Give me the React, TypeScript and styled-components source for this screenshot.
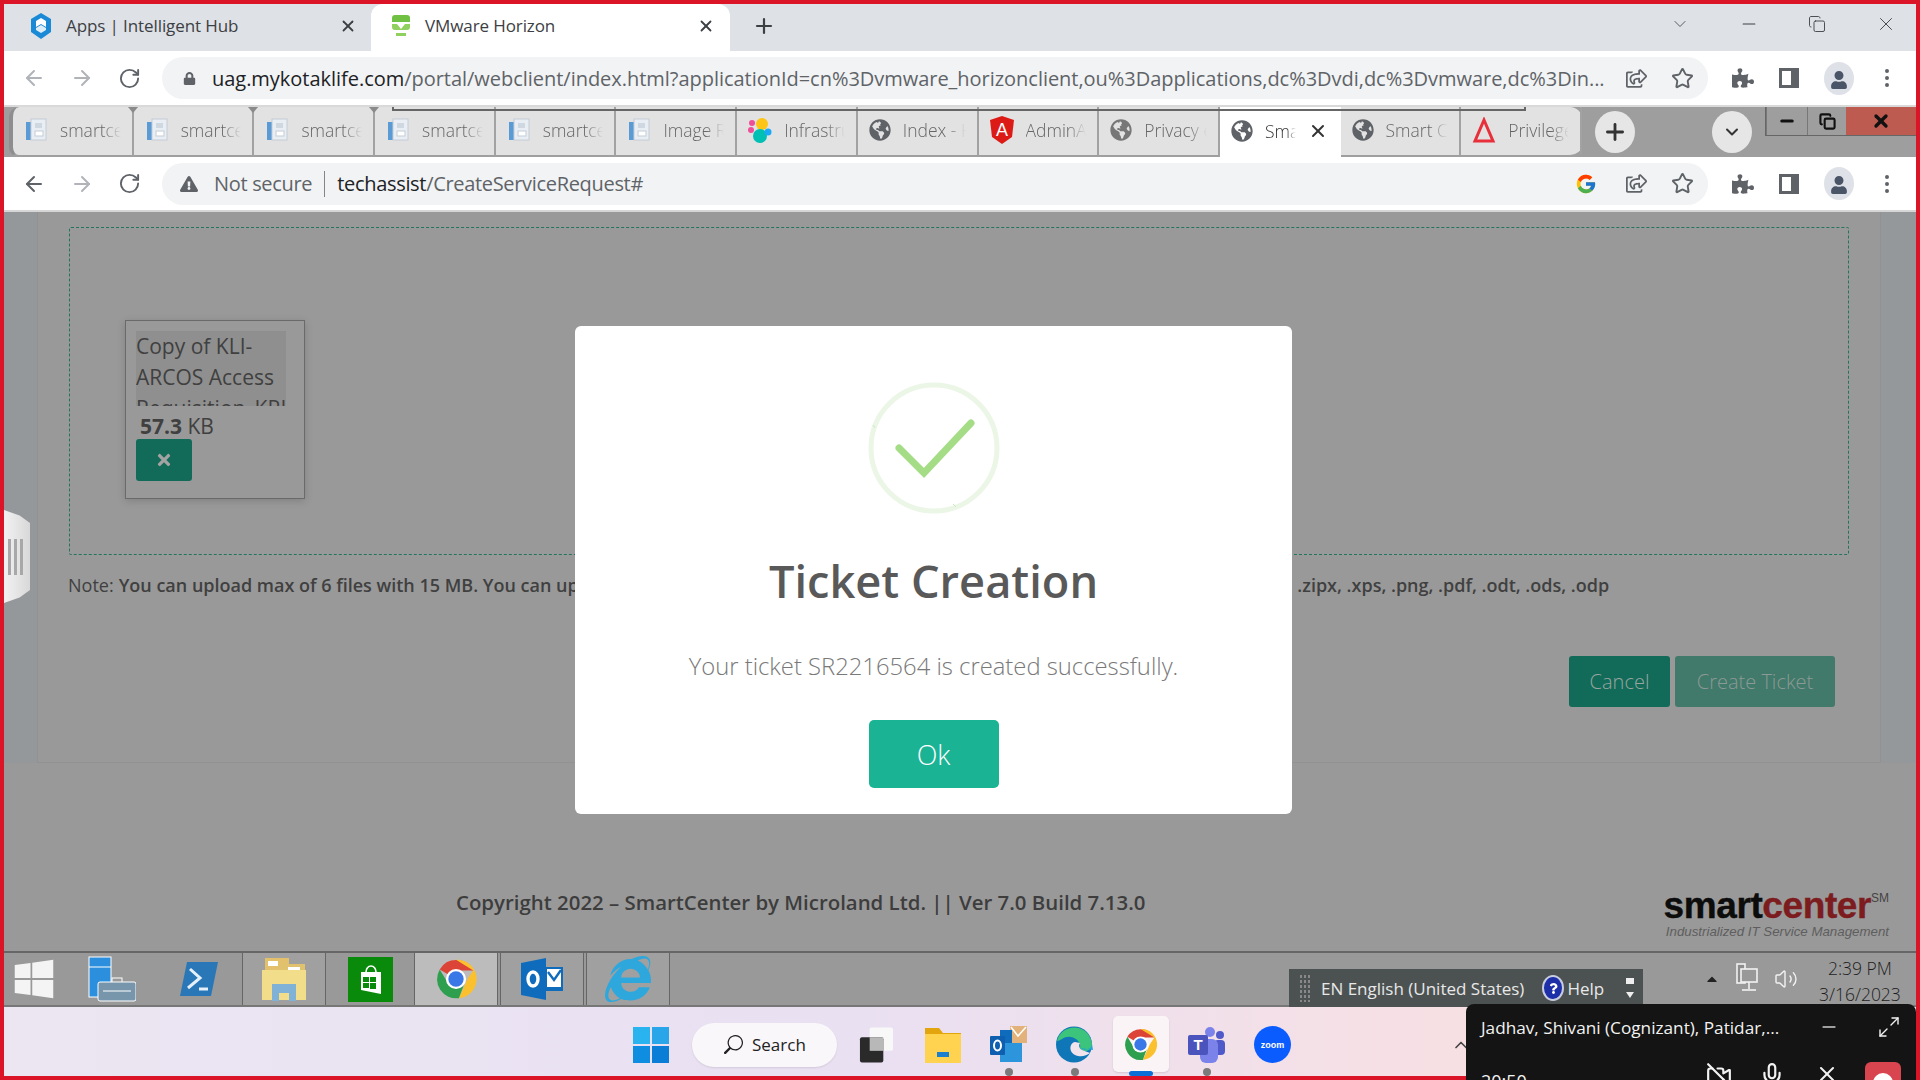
import React from "react";
import styled, { createGlobalStyle } from "styled-components";
import { ArrowLeft, ArrowRight, RotateCw, Star, MoreVertical, Minus, Plus, X, ChevronDown, ChevronUp, Copy, Maximize2, Mic, VideoOff, Volume2 } from "lucide-react";
import { FaLock, FaExclamationTriangle, FaPuzzlePiece, FaUser, FaGlobeAmericas, FaTimes, FaRegShareSquare, FaInternetExplorer, FaWindows, FaCaretUp, FaQuestion } from "react-icons/fa";
import { FcGoogle } from "react-icons/fc";
import { BsSearch } from "react-icons/bs";

const GlobalStyle = createGlobalStyle`
  html, body { margin: 0; padding: 0; background: #999; }
  body { font-family: "Open Sans", "Liberation Sans", sans-serif; }
  * { box-sizing: border-box; }
`;

const Frame = styled.div`
  position: relative;
  width: 1920px;
  height: 1080px;
  border: 4px solid #dc1428;
  display: flex;
  flex-direction: column;
`;

/* ---- outer chrome ---- */
const TopTabs = styled.div`
  height: 47px;
  background: #dee1e6;
  display: flex;
  align-items: stretch;
  color: #3c4043;
`;

const TopTab = styled.div<{ $active?: boolean }>`
  width: 359px;
  padding: 0 ${(p) => (p.$active ? "15px" : "14px")} 4px ${(p) => (p.$active ? "19px" : "17px")};
  background: ${(p) => (p.$active ? "#fff" : "transparent")};
  border-radius: 12px 12px 0 0;
  display: flex;
  align-items: center;
  gap: 13px;
  font-size: 17px;
  letter-spacing: -0.1px;
  margin-left: ${(p) => (p.$active ? "0" : "8px")};
  & > span { flex: 1; white-space: nowrap; }
`;

const NewTab = styled.div`
  width: 68px;
  padding-bottom: 4px;
  display: flex;
  align-items: center;
  justify-content: center;
  color: #3c4043;
`;

const WinControls = styled.div`
  margin-left: auto;
  padding: 0 19px 7px 0;
  display: flex;
  align-items: center;
  gap: 49px;
  color: #3c4043;
`;

const Toolbar = styled.div<{ $tall?: boolean }>`
  height: ${(p) => (p.$tall ? "55px" : "54px")};
  background: #fff;
  display: flex;
  align-items: center;
  padding-left: 18px;
  border-bottom: ${(p) => (p.$tall ? "2px solid #d6d6d6" : "none")};
`;

const NavButtons = styled.div`
  display: flex;
  align-items: center;
  gap: 24px;
  width: 140px;
`;

const Omnibox = styled.div<{ $tight?: boolean }>`
  width: 1546px;
  height: 42px;
  border-radius: 21px;
  background: #f1f3f4;
  display: flex;
  align-items: center;
  padding: 0 14px 0 ${(p) => (p.$tight ? "18px" : "21px")};
  font-size: 20px;
  letter-spacing: ${(p) => (p.$tight ? "-0.32px" : "-0.03px")};
  color: #5f6368;
  gap: ${(p) => (p.$tight ? "12px" : "16px")};
  white-space: nowrap;
  & > svg:first-child { margin-right: ${(p) => (p.$tight ? "4px" : "0")}; }
`;

const UrlText = styled.div`
  flex: 1;
  overflow: hidden;
  & > b { font-weight: 400; color: #202124; }
`;

const Divider = styled.i`
  width: 1px;
  height: 26px;
  background: #80868b;
`;

const OmniActions = styled.div`
  display: flex;
  align-items: center;
  gap: 24px;
  color: #5f6368;
`;

const GoogleMark = styled(FcGoogle)`
  margin-right: 5px;
`;

const ToolIcons = styled.div`
  display: flex;
  align-items: center;
  gap: 25px;
  margin-left: 24px;
  color: #5f6368;
  & > svg:last-child { margin-left: -4px; }
`;

const Avatar = styled.div`
  width: 30px;
  height: 33px;
  border-radius: 50%;
  background: #dfe1e8;
  display: flex;
  align-items: flex-end;
  justify-content: center;
  color: #4a5568;
  padding-bottom: 6px;
`;

const ToolbarGap = styled.div`
  height: 2px;
  background: #d9d9d9;
`;

/* ---- inner tab strip ---- */
const InnerStrip = styled.div`
  position: relative;
  height: 50px;
  background: #9e9e9e;
  display: flex;
`;

const TabGroup = styled.div`
  margin-left: 5px;
  display: flex;
  background: #e2e2e2;
  border-bottom: 2px solid #9f9f9f;
  border-radius: 10px 12px 12px 10px;
  border-left: 4px solid #8e8e8e;
`;

const InnerTab = styled.div<{ $active?: boolean; $tick?: boolean }>`
  position: relative;
  width: 120.7px;
  display: flex;
  align-items: center;
  padding: 0 ${(p) => (p.$active ? "0" : "11px")} 2px 11px;
  gap: 12px;
  font-size: 17.5px;
  font-weight: 300;
  color: ${(p) => (p.$active ? "#333" : "#666")};
  background: ${(p) => (p.$active ? "#fff" : "transparent")};
  border-right: ${(p) => (p.$active ? "none" : "2px solid #a2a2a2")};
  margin-bottom: ${(p) => (p.$active ? "-2px" : "0")};
  white-space: nowrap;
  & > span {
    flex: 1;
    min-width: 0;
    overflow: hidden;
    -webkit-mask-image: linear-gradient(90deg, #000 70%, transparent);
    mask-image: linear-gradient(90deg, #000 70%, transparent);
  }
  &::after {
    content: "";
    display: ${(p) => (p.$tick ? "block" : "none")};
    position: absolute;
    right: -6px;
    top: 0;
    border-left: 5px solid transparent;
    border-right: 5px solid transparent;
    border-top: 6px solid #8a8a8a;
  }
`;

const GhostLine = styled.div`
  position: absolute;
  left: 388px;
  top: 0;
  width: 1134px;
  height: 4px;
  border-bottom: 2px solid #666;
  border-left: 2px solid #666;
  border-right: 2px solid #666;
`;

const RoundBtn = styled.div<{ $ml: number }>`
  width: 40px;
  height: 42px;
  margin-left: ${(p) => p.$ml}px;
  border-radius: 50%;
  background: #e6e6e6;
  display: flex;
  align-items: center;
  justify-content: center;
  color: #333;
  align-self: center;
`;

const StripCtrls = styled.div`
  margin-left: auto;
  align-self: flex-start;
  display: flex;
  height: 29px;
  border-bottom: 1px solid #666;
  border-left: 1px solid #666;
  color: #111;
`;

const StripCtrl = styled.div<{ $w: number; $red?: boolean }>`
  width: ${(p) => p.$w}px;
  display: flex;
  align-items: center;
  justify-content: center;
  background: ${(p) => (p.$red ? "#bd5b50" : "#9e9e9e")};
  border-left: ${(p) => (p.$red ? "none" : "1px solid #777")};
`;

/* ---- page ---- */
const Page = styled.div`
  height: 739px;
  background: #999;
  display: flex;
  flex-direction: column;
`;

const Main = styled.div`
  height: 551px;
  display: flex;
  background: #95989b;
`;

const Gutter = styled.div<{ $w: number }>`
  width: ${(p) => p.$w}px;
`;

const Card = styled.div`
  flex: 1;
  background: #999;
  border: 1px solid #929292;
  border-top: none;
  padding: 15px 31px 0;
  display: flex;
  flex-direction: column;
`;

const DropZone = styled.div`
  height: 328px;
  border: 1px dashed #22745f;
  border-radius: 2px;
  padding: 92px 0 0 55px;
`;

const FileCard = styled.div`
  width: 180px;
  height: 179px;
  border: 1px solid #6a6a6a;
  box-shadow: 0 2px 8px rgba(0, 0, 0, 0.16);
  padding: 10px 10px 0;
`;

const FileName = styled.div`
  width: 150px;
  height: 75px;
  overflow: hidden;
  background: #8f8f8f;
  font-size: 21px;
  line-height: 31px;
  color: #404040;
`;

const FileSize = styled.div`
  font-size: 21px;
  line-height: 25px;
  margin: 8px 0 0 4px;
  color: #404040;
  & > b { font-weight: 700; }
`;

const RemoveBtn = styled.div`
  width: 56px;
  height: 42px;
  background: #116b58;
  border-radius: 3px;
  display: flex;
  align-items: center;
  justify-content: center;
  color: #a3a3a3;
`;

const Note = styled.div`
  margin: 19px 0 0 -1px;
  height: 22px;
  line-height: 22px;
  display: flex;
  font-size: 18px;
  font-weight: 600;
  color: #404040;
  white-space: nowrap;
  & > em { font-style: normal; font-weight: 400; margin-right: 5px; }
  & > span + span { margin-left: 681px; }
`;

const Actions = styled.div`
  margin-top: 60px;
  padding-right: 14px;
  display: flex;
  justify-content: flex-end;
  gap: 5px;
`;

const ActionBtn = styled.div<{ $w: number; $muted?: boolean }>`
  width: ${(p) => p.$w}px;
  height: 51px;
  border-radius: 3px;
  background: ${(p) => (p.$muted ? "#41796a" : "#116b58")};
  color: ${(p) => (p.$muted ? "#8c9a95" : "#99a5a0")};
  font-size: 20px;
  font-weight: 300;
  display: flex;
  align-items: center;
  justify-content: center;
`;

const Footer = styled.div`
  flex: 1;
  display: flex;
  justify-content: space-between;
  align-items: flex-start;
  padding: 125px 27px 0 452px;
`;

const Copyright = styled.div`
  font-size: 20.4px;
  line-height: 28px;
  font-weight: 600;
  color: #3d3d3d;
  white-space: nowrap;
`;

const Logo = styled.div`
  margin-top: -1px;
  text-align: right;
  font-family: "Liberation Sans", sans-serif;
`;

const LogoMark = styled.div`
  font-size: 37px;
  line-height: 37px;
  font-weight: 700;
  letter-spacing: -0.4px;
  color: #0c0c0c;
  white-space: nowrap;
  -webkit-text-stroke: 0.4px currentColor;
  & > em { font-style: normal; color: #7c1c1e; }
  & > sup {
    font-size: 12px;
    font-weight: 400;
    color: #444;
    vertical-align: 16px;
    line-height: 0;
    letter-spacing: 0;
    -webkit-text-stroke: 0;
  }
`;

const LogoTag = styled.div`
  font-size: 13.3px;
  line-height: 16px;
  font-style: italic;
  color: #5e5e5e;
  white-space: nowrap;
`;

const SideHandle = styled.div`
  position: absolute;
  left: 0;
  top: 506px;
  width: 26px;
  height: 93px;
  background: linear-gradient(90deg, #f2f2f2, #d8d8d8);
  clip-path: polygon(0 0, 60% 6%, 100% 14%, 100% 86%, 60% 94%, 0 100%);
  display: flex;
  justify-content: center;
  align-items: center;
  gap: 3px;
  padding-right: 4px;
  & > i { width: 3px; height: 36px; background: #a8a8a8; }
`;

/* ---- success dialog ---- */
const Dialog = styled.div`
  position: absolute;
  left: 571px;
  top: 322px;
  width: 717px;
  height: 488px;
  background: #fff;
  border-radius: 6px;
  display: flex;
  flex-direction: column;
  align-items: center;
  padding-top: 56px;
`;

const DialogTitle = styled.div`
  margin-top: 37px;
  font-size: 45.2px;
  line-height: 60px;
  font-weight: 600;
  color: #595959;
  white-space: nowrap;
`;

const DialogText = styled.div`
  margin-top: 37px;
  font-size: 23.8px;
  line-height: 36px;
  font-weight: 300;
  color: #797979;
  white-space: nowrap;
`;

const OkBtn = styled.div`
  margin-top: 36px;
  width: 130px;
  height: 68px;
  background: #1ab394;
  border-radius: 5px;
  font-size: 27px;
  font-weight: 300;
  color: #fff;
  display: flex;
  align-items: center;
  justify-content: center;
`;

/* ---- remote taskbar ---- */
const LegacyBar = styled.div`
  height: 56px;
  background: #999;
  border-top: 2px solid #666;
  border-bottom: 2px solid #777;
  display: flex;
  align-items: stretch;
`;

const LegacySlot = styled.div<{ $w: number; $boxed?: boolean; $lit?: boolean; $mr?: number }>`
  width: ${(p) => p.$w}px;
  margin-right: ${(p) => p.$mr ?? 0}px;
  display: flex;
  align-items: center;
  justify-content: center;
  background: ${(p) => (p.$lit ? "#bcbcbc" : p.$boxed ? "#a0a0a0" : "transparent")};
  border: ${(p) => (p.$boxed ? "1px solid #666" : "none")};
  border-top: none;
  border-bottom: none;
`;

const LangBar = styled.div`
  margin-left: auto;
  width: 354px;
  margin-top: 16px;
  margin-bottom: -2px;
  background: #4c5252;
  color: #e8e8e8;
  display: flex;
  align-items: center;
  font-size: 17px;
  padding-left: 10px;
  white-space: nowrap;
`;

const Grip = styled.div`
  width: 12px;
  height: 28px;
  margin-right: 10px;
  background-image: radial-gradient(#888 1px, transparent 1.2px);
  background-size: 4px 5px;
`;

const HelpDot = styled.div`
  width: 22px;
  height: 26px;
  margin: 0 3px 0 18px;
  border-radius: 50%;
  background: #1c2fa8;
  border: 2px solid #c8cce0;
  display: flex;
  align-items: center;
  justify-content: center;
  color: #fff;
`;

const LangArrows = styled.div`
  margin-left: 22px;
  display: flex;
  flex-direction: column;
  align-items: center;
  gap: 8px;
  & > i:first-child { width: 8px; height: 6px; background: #eee; }
  & > i:last-child {
    width: 0;
    height: 0;
    border-left: 4px solid transparent;
    border-right: 4px solid transparent;
    border-top: 6px solid #eee;
  }
`;

const Tray = styled.div`
  width: 273px;
  padding-left: 61px;
  display: flex;
  align-items: center;
  gap: 16px;
  color: #f2f2f2;
`;

const Clock = styled.div`
  margin-left: 5px;
  padding-top: 3px;
  text-align: center;
  font-size: 17.5px;
  line-height: 26px;
  font-weight: 300;
  color: #1c1c1c;
  white-space: nowrap;
`;

/* ---- host taskbar ---- */
const Taskbar = styled.div`
  height: 69px;
  background: linear-gradient(90deg, #ebe6f2 0%, #e9e0f2 45%, #f7e0e4 75%, #f4e4ea 100%);
  display: flex;
  align-items: center;
  padding: 6px 0 0 629px;
`;

const SearchPill = styled.div`
  width: 145px;
  height: 44px;
  margin: 0 21px 0 23px;
  border-radius: 22px;
  background: #faf7fb;
  box-shadow: 0 1px 2px rgba(0, 0, 0, 0.1);
  display: flex;
  align-items: center;
  gap: 9px;
  padding-left: 32px;
  font-size: 17px;
  color: #222;
`;

const TaskItem = styled.div<{ $ml?: number; $dot?: string; $on?: boolean }>`
  position: relative;
  width: 37px;
  height: 37px;
  margin-left: ${(p) => p.$ml ?? 29}px;
  display: flex;
  align-items: center;
  justify-content: center;
  &::before {
    content: "";
    display: ${(p) => (p.$on ? "block" : "none")};
    position: absolute;
    left: -9px;
    top: -10px;
    width: 56px;
    height: 56px;
    border-radius: 5px;
    background: #fbf4f7;
    box-shadow: 0 1px 2px rgba(0, 0, 0, 0.12);
  }
  &::after {
    content: "";
    display: ${(p) => (p.$dot ? "block" : "none")};
    position: absolute;
    bottom: -13px;
    left: 50%;
    transform: translateX(-50%);
    width: ${(p) => (p.$dot === "wide" ? "24px" : "8px")};
    height: ${(p) => (p.$dot === "wide" ? "5px" : "8px")};
    border-radius: 4px;
    background: ${(p) => (p.$dot === "wide" ? "#0a6fd6" : "#7b7b7b")};
  }
  & > svg, & > div { position: relative; z-index: 1; }
`;

const ZoomBadge = styled.div`
  width: 37px;
  height: 37px;
  border-radius: 50%;
  background: #0b5cff;
  color: #fff;
  font-family: "Liberation Sans", sans-serif;
  font-size: 9px;
  font-weight: 700;
  display: flex;
  align-items: center;
  justify-content: center;
`;

const ZoomWindow = styled.div`
  position: absolute;
  left: 1462px;
  top: 1000px;
  width: 450px;
  height: 76px;
  background: #141414;
  border-radius: 8px 8px 0 0;
  overflow: hidden;
  color: #f2f2f2;
  padding-left: 15px;
`;

const ZoomHead = styled.div`
  height: 46px;
  display: flex;
  align-items: center;
  font-size: 17.2px;
  white-space: nowrap;
  & > span { flex: 1; }
`;

const ZoomMin = styled.div`
  margin-right: 38px;
  display: flex;
  color: #ccc;
`;

const ZoomExpand = styled.div`
  margin-right: 15px;
  display: flex;
`;

const ZoomRow = styled.div`
  margin-top: 12px;
  display: flex;
  align-items: flex-start;
`;

const ZoomTime = styled.div`
  font-size: 18px;
  line-height: 24px;
  margin-top: 7px;
  width: 223px;
`;

const ZoomTool = styled.div<{ $w: number }>`
  width: ${(p) => p.$w}px;
  display: flex;
  justify-content: center;
`;

const ZoomEnd = styled.div`
  width: 36px;
  height: 40px;
  margin-left: 21px;
  border-radius: 6px;
  background: #d9454f;
  display: flex;
  justify-content: center;
  padding-top: 11px;
  & > i { width: 20px; height: 20px; border-radius: 50%; background: #fff; }
`;

/* ---- drawn icons ---- */
function ChromeIcon({ s = 37 }: { s?: number }) {
  return (
    <svg width={s} height={s} viewBox="0 0 48 48">
      <path d="M24 24 L7 14 A20 20 0 0 1 42 15 L24 15 Z" fill="#db4437" />
      <path d="M24 4 A20 20 0 0 1 27 44 L36 24 L42 15 Z" fill="#fbc02d" />
      <path d="M7 14 A20 20 0 0 0 27 44 L33 28 L16 29 Z" fill="#2e9e4f" />
      <circle cx="24" cy="24" r="10.5" fill="#fff" />
      <circle cx="24" cy="24" r="8" fill="#3b78e7" />
    </svg>
  );
}

function DocIcon() {
  return (
    <svg width="24" height="24" viewBox="0 0 24 24">
      <rect x="2" y="4" width="5" height="18" fill="#5b9bd5" />
      <rect x="7" y="1" width="15" height="21" fill="#e9eef4" stroke="#c3ccd6" />
      <rect x="11" y="5" width="7" height="5" fill="#cfd8e0" />
      <rect x="11" y="13" width="8" height="5" fill="#fff" stroke="#c3ccd6" />
    </svg>
  );
}

function ElasticIcon() {
  return (
    <svg width="24" height="26" viewBox="0 0 24 26">
      <circle cx="14" cy="7" r="6" fill="#fec514" />
      <circle cx="12" cy="19" r="7" fill="#00bfb3" />
      <circle cx="4" cy="6" r="3" fill="#f04e98" />
      <circle cx="3" cy="13" r="3" fill="#f04e98" />
      <circle cx="20" cy="15" r="3.5" fill="#1ba9f5" />
    </svg>
  );
}

function AngularIcon() {
  return (
    <svg width="24" height="28" viewBox="0 0 24 28">
      <path d="M12 0 L24 4 L22 21 L12 28 L2 21 L0 4 Z" fill="#dd1b16" />
      <text x="12" y="20" textAnchor="middle" fontSize="18" fill="#fff" fontFamily="Liberation Sans">A</text>
    </svg>
  );
}

function TriangleIcon() {
  return (
    <svg width="24" height="26" viewBox="0 0 24 26">
      <path d="M12 3 L21 24 H3 Z" fill="none" stroke="#e8303c" strokeWidth="3" />
    </svg>
  );
}

function PanelIcon() {
  return (
    <svg width="20" height="20" viewBox="0 0 20 20">
      <rect x="1.5" y="1.5" width="17" height="17" fill="none" stroke="#5f6368" strokeWidth="3" />
      <rect x="12" y="2" width="6" height="16" fill="#5f6368" />
    </svg>
  );
}

function HubIcon() {
  return (
    <svg width="24" height="26" viewBox="0 0 24 26">
      <path d="M12 0 L22 6 V19 L12 26 L2 19 V6 Z" fill="#1b8ad6" />
      <path d="M12 5 L17 8 V14 L12 11 L7 14 V8 Z" fill="#fff" />
      <path d="M7 15 L12 12 L17 15 V17 L12 20 L7 17 Z" fill="#fff" opacity="0.85" />
    </svg>
  );
}

function HorizonIcon() {
  return (
    <svg width="22" height="24" viewBox="0 0 22 24">
      <path d="M2 4 Q2 1 5 1 H17 Q20 1 20 4 V8 H2 Z" fill="#70c043" />
      <path d="M2 10 H7 L11 15 L15 10 H20 V13 Q20 16 17 16 H5 Q2 16 2 13 Z" fill="#8fd05f" />
      <rect x="6" y="19" width="10" height="3" fill="#8fd05f" />
    </svg>
  );
}

function ServerIcon() {
  return (
    <svg width="48" height="46" viewBox="0 0 48 46">
      <rect x="1" y="1" width="22" height="40" fill="#2b8fdd" stroke="#fff" />
      <line x1="1" y1="11" x2="23" y2="11" stroke="#fff" />
      <rect x="24" y="22" width="10" height="8" fill="none" stroke="#fff" />
      <rect x="10" y="26" width="38" height="19" rx="2" fill="#7795ab" stroke="#fff" />
      <line x1="15" y1="35" x2="43" y2="35" stroke="#fff" />
    </svg>
  );
}

function PowerShellIcon() {
  return (
    <svg width="40" height="36" viewBox="0 0 40 36">
      <path d="M8 1 H39 L32 35 H1 Z" fill="#2a77b8" />
      <path d="M11 8 L21 17 L9 27" fill="none" stroke="#e6f0f8" strokeWidth="3" />
      <line x1="20" y1="28" x2="29" y2="28" stroke="#e6f0f8" strokeWidth="3" />
    </svg>
  );
}

function ExplorerIcon() {
  return (
    <svg width="46" height="46" viewBox="0 0 46 46">
      <rect x="4" y="2" width="24" height="14" fill="#e2c06c" />
      <rect x="7" y="5" width="10" height="5" fill="#fff" />
      <rect x="18" y="8" width="26" height="14" fill="#dfc16e" />
      <rect x="27" y="11" width="12" height="5" fill="#fff" />
      <path d="M1 14 H45 V44 H1 Z" fill="#f2dd8b" />
      <path d="M11 28 H35 V45 H28 V37 H18 V45 H11 Z" fill="#7fb2d6" />
    </svg>
  );
}

function StoreIcon() {
  return (
    <svg width="45" height="45" viewBox="0 0 45 45">
      <rect width="45" height="45" fill="#0a8a0a" />
      <path d="M13 15 H33 V37 L13 33 Z" fill="#fff" />
      <path d="M18 15 A5 6 0 0 1 28 15" fill="none" stroke="#fff" strokeWidth="1.6" />
      <rect x="15" y="20" width="6" height="5" fill="#0a8a0a" />
      <rect x="22" y="20" width="6" height="5" fill="#0a8a0a" />
      <rect x="15" y="26" width="6" height="5" fill="#0a8a0a" />
      <rect x="22" y="26" width="6" height="6" fill="#0a8a0a" />
    </svg>
  );
}

function OutlookIcon() {
  return (
    <svg width="42" height="42" viewBox="0 0 42 42">
      <rect x="24" y="9" width="18" height="24" fill="#0f6cbd" />
      <rect x="26" y="11" width="14" height="18" fill="#fff" />
      <path d="M27 14 L33 22 L40 12" fill="none" stroke="#0f6cbd" strokeWidth="2.4" />
      <path d="M0 5 L25 0 V42 L0 37 Z" fill="#0f6cbd" />
      <ellipse cx="12" cy="21" rx="5" ry="7" fill="none" stroke="#fff" strokeWidth="3.4" />
    </svg>
  );
}

function OutlookNewIcon() {
  return (
    <svg width="37" height="37" viewBox="0 0 37 37">
      <rect x="20" y="0" width="17" height="17" fill="#e3b27a" />
      <path d="M21 1 L28 10 L36 1" fill="none" stroke="#fff" strokeWidth="1.5" />
      <rect x="10" y="4" width="12" height="13" fill="#0f6cbd" />
      <rect x="10" y="17" width="22" height="19" fill="#2c95dc" />
      <rect x="0" y="10" width="15" height="19" rx="1" fill="#0f5fb0" />
      <ellipse cx="7.5" cy="19.5" rx="3.5" ry="5" fill="none" stroke="#fff" strokeWidth="2" />
    </svg>
  );
}

function Win11Icon() {
  return (
    <svg width="36" height="36" viewBox="0 0 36 36">
      <rect width="17" height="17" fill="#29b4ef" />
      <rect x="19" width="17" height="17" fill="#29a6ea" />
      <rect y="19" width="17" height="17" fill="#0f8de0" />
      <rect x="19" y="19" width="17" height="17" fill="#0a7ed6" />
    </svg>
  );
}

function TaskViewIcon() {
  return (
    <svg width="38" height="36" viewBox="0 0 38 36">
      <rect x="12" y="0" width="24" height="24" rx="2" fill="#f8f8f8" />
      <rect x="2" y="10" width="24" height="26" rx="2" fill="#2a2a2a" />
      <rect x="12" y="10" width="14" height="14" fill="#b8b8b8" />
    </svg>
  );
}

function FolderIcon() {
  return (
    <svg width="36" height="36" viewBox="0 0 36 36">
      <path d="M0 1 H14 L18 6 H36 V34 H0 Z" fill="#e3a50e" />
      <rect y="7" width="36" height="29" fill="#ffd34f" />
      <rect x="12" y="25" width="12" height="5" fill="#1c7ecf" />
    </svg>
  );
}

function EdgeIcon() {
  return (
    <svg width="37" height="37" viewBox="0 0 37 37">
      <circle cx="18" cy="18.5" r="18" fill="#0f77b8" />
      <path d="M1 15 C5 -3 33 -4 36 18 C36 26 26 27 24 22 C26 14 14 7 6 13 C4 14 2 15 1 15 Z" fill="#3cc47c" />
      <path d="M36 18 C36 24 27 25 25 22 L37 24 Z" fill="#1fa5d8" />
      <path d="M19 16 C13 17 12 28 22 30 C27 31 31 29 34 27 L26 24 C24 23 22 20 24 17 Z" fill="#f0e3ec" />
    </svg>
  );
}

function TeamsIcon() {
  return (
    <svg width="37" height="37" viewBox="0 0 37 37">
      <circle cx="22" cy="6" r="5" fill="#7b83eb" />
      <circle cx="32" cy="9" r="4" fill="#5059c9" />
      <rect x="26" y="14" width="11" height="15" rx="4" fill="#5059c9" />
      <rect x="12" y="13" width="18" height="24" rx="6" fill="#7b83eb" />
      <rect x="0" y="9" width="20" height="20" rx="2" fill="#4b53bc" />
      <text x="10" y="24" textAnchor="middle" fontSize="15" fontWeight="700" fill="#fff" fontFamily="Liberation Sans">T</text>
    </svg>
  );
}

function NetworkIcon() {
  return (
    <svg width="22" height="32" viewBox="0 0 22 32" fill="none" stroke="#f2f2f2" strokeWidth="1.6">
      <rect x="1" y="1" width="8" height="19" fill="#8c8c8c" />
      <rect x="5" y="6" width="16" height="13" fill="#999" />
      <line x1="13" y1="19" x2="13" y2="26" />
      <line x1="6" y1="27" x2="20" y2="27" />
    </svg>
  );
}

const doc = <DocIcon />;
const globe = (c: string) => <FaGlobeAmericas size={22} color={c} />;

const innerTabs: { label: string; icon: React.ReactNode; active?: boolean; tick?: boolean }[] = [
  { label: "smartcenter", icon: doc, tick: true },
  { label: "smartcenter", icon: doc, tick: true },
  { label: "smartcenter", icon: doc, tick: true },
  { label: "smartcenter", icon: doc },
  { label: "smartcenter", icon: doc },
  { label: "Image Resizer", icon: doc },
  { label: "Infrastructure", icon: <ElasticIcon /> },
  { label: "Index - Home", icon: globe("#5f6368") },
  { label: "AdminArea", icon: <AngularIcon /> },
  { label: "Privacy error", icon: globe("#777") },
  { label: "Smart", icon: globe("#5f6368"), active: true },
  { label: "Smart Center", icon: globe("#5f6368") },
  { label: "Privileged", icon: <TriangleIcon /> },
];

export default function App() {
  return (
    <>
      <GlobalStyle />
      <Frame>
        <TopTabs>
          <TopTab>
            <HubIcon />
            <span>Apps | Intelligent Hub</span>
            <X size={18} strokeWidth={2.4} />
          </TopTab>
          <TopTab $active>
            <HorizonIcon />
            <span>VMware Horizon</span>
            <X size={18} strokeWidth={2.4} />
          </TopTab>
          <NewTab>
            <Plus size={24} strokeWidth={2.2} />
          </NewTab>
          <WinControls>
            <ChevronDown size={20} strokeWidth={1} />
            <Minus size={20} strokeWidth={1.4} />
            <Copy size={18} strokeWidth={1.2} />
            <X size={22} strokeWidth={1} />
          </WinControls>
        </TopTabs>

        <Toolbar>
          <NavButtons>
            <ArrowLeft size={24} color="#b0b3b8" />
            <ArrowRight size={24} color="#b0b3b8" />
            <RotateCw size={23} color="#5f6368" />
          </NavButtons>
          <Omnibox>
            <FaLock size={13} />
            <UrlText>
              <b>uag.mykotaklife.com</b>/portal/webclient/index.html?applicationId=cn%3Dvmware_horizonclient,ou%3Dapplications,dc%3Dvdi,dc%3Dvmware,dc%3Din...
            </UrlText>
            <OmniActions>
              <FaRegShareSquare size={21} />
              <Star size={23} />
            </OmniActions>
          </Omnibox>
          <ToolIcons>
            <FaPuzzlePiece size={22} />
            <PanelIcon />
            <Avatar>
              <FaUser size={18} />
            </Avatar>
            <MoreVertical size={24} />
          </ToolIcons>
        </Toolbar>
        <ToolbarGap />

        <InnerStrip>
          <TabGroup>
            {innerTabs.map((t, i) => (
              <InnerTab key={i} $active={t.active} $tick={t.tick}>
                {t.icon}
                <span>{t.label}</span>
                {t.active && <X size={20} color="#333" strokeWidth={2.4} style={{ marginRight: 13 }} />}
              </InnerTab>
            ))}
          </TabGroup>
          <GhostLine />
          <RoundBtn $ml={13}>
            <Plus size={26} strokeWidth={2.6} />
          </RoundBtn>
          <RoundBtn $ml={77}>
            <ChevronDown size={20} strokeWidth={2.4} />
          </RoundBtn>
          <StripCtrls>
            <StripCtrl $w={41}>
              <Minus size={18} strokeWidth={4} />
            </StripCtrl>
            <StripCtrl $w={39}>
              <Copy size={17} strokeWidth={3} />
            </StripCtrl>
            <StripCtrl $w={70} $red>
              <X size={20} strokeWidth={4} />
            </StripCtrl>
          </StripCtrls>
        </InnerStrip>

        <Toolbar $tall>
          <NavButtons>
            <ArrowLeft size={24} color="#5f6368" />
            <ArrowRight size={24} color="#b0b3b8" />
            <RotateCw size={23} color="#5f6368" />
          </NavButtons>
          <Omnibox $tight>
            <FaExclamationTriangle size={18} />
            <span>Not secure</span>
            <Divider />
            <UrlText>
              <b>techassist</b>/CreateServiceRequest#
            </UrlText>
            <OmniActions>
              <GoogleMark size={22} />
              <FaRegShareSquare size={21} />
              <Star size={23} />
            </OmniActions>
          </Omnibox>
          <ToolIcons>
            <FaPuzzlePiece size={22} />
            <PanelIcon />
            <Avatar>
              <FaUser size={18} />
            </Avatar>
            <MoreVertical size={24} />
          </ToolIcons>
        </Toolbar>

        <Page>
          <Main>
            <Gutter $w={33} />
            <Card>
              <DropZone>
                <FileCard>
                  <FileName>Copy of KLI-ARCOS Access Requisition_KRI</FileName>
                  <FileSize>
                    <b>57.3</b> KB
                  </FileSize>
                  <RemoveBtn>
                    <FaTimes size={18} />
                  </RemoveBtn>
                </FileCard>
              </DropZone>
              <Note>
                <em>Note:</em>
                <span>You can upload max of 6 files with 15 MB. You can upload</span>
                <span>.zipx, .xps, .png, .pdf, .odt, .ods, .odp</span>
              </Note>
              <Actions>
                <ActionBtn $w={101}>Cancel</ActionBtn>
                <ActionBtn $w={160} $muted>
                  Create Ticket
                </ActionBtn>
              </Actions>
            </Card>
            <Gutter $w={35} />
          </Main>
          <Footer>
            <Copyright>Copyright 2022 – SmartCenter by Microland Ltd. || Ver 7.0 Build 7.13.0</Copyright>
            <Logo>
              <LogoMark>
                smart<em>center</em>
                <sup>SM</sup>
              </LogoMark>
              <LogoTag>Industrialized IT Service Management</LogoTag>
            </Logo>
          </Footer>
        </Page>

        <LegacyBar>
          <LegacySlot $w={60}>
            <FaWindows size={44} color="#f4f4f4" />
          </LegacySlot>
          <LegacySlot $w={96}>
            <ServerIcon />
          </LegacySlot>
          <LegacySlot $w={78} $mr={4}>
            <PowerShellIcon />
          </LegacySlot>
          <LegacySlot $w={84} $boxed>
            <ExplorerIcon />
          </LegacySlot>
          <LegacySlot $w={88}>
            <StoreIcon />
          </LegacySlot>
          <LegacySlot $w={84} $boxed $lit $mr={2}>
            <ChromeIcon s={46} />
          </LegacySlot>
          <LegacySlot $w={84} $boxed $mr={2}>
            <OutlookIcon />
          </LegacySlot>
          <LegacySlot $w={84} $boxed>
            <FaInternetExplorer size={46} color="#2ea8dc" />
          </LegacySlot>
          <LangBar>
            <Grip />
            <span>EN English (United States)</span>
            <HelpDot>
              <FaQuestion size={11} />
            </HelpDot>
            <span>Help</span>
            <LangArrows>
              <i />
              <i />
            </LangArrows>
          </LangBar>
          <Tray>
            <FaCaretUp size={16} color="#222" />
            <NetworkIcon />
            <Volume2 size={24} strokeWidth={1.4} />
            <Clock>
              2:39 PM
              <br />
              3/16/2023
            </Clock>
          </Tray>
        </LegacyBar>

        <Taskbar>
          <Win11Icon />
          <SearchPill>
            <BsSearch size={19} style={{ transform: "scaleX(-1)" }} />
            Search
          </SearchPill>
          <TaskItem $ml={0}>
            <TaskViewIcon />
          </TaskItem>
          <TaskItem>
            <FolderIcon />
          </TaskItem>
          <TaskItem $dot="dot">
            <OutlookNewIcon />
          </TaskItem>
          <TaskItem $dot="dot">
            <EdgeIcon />
          </TaskItem>
          <TaskItem $dot="wide" $on>
            <ChromeIcon />
          </TaskItem>
          <TaskItem $dot="dot">
            <TeamsIcon />
          </TaskItem>
          <TaskItem>
            <ZoomBadge>zoom</ZoomBadge>
          </TaskItem>
          <ChevronUp size={20} color="#444" style={{ marginLeft: 160 }} />
        </Taskbar>

        <SideHandle>
          <i />
          <i />
          <i />
        </SideHandle>

        <Dialog>
          <svg width="132" height="132" viewBox="0 0 132 132">
            <circle cx="66" cy="66" r="63" fill="none" stroke="#ebf6e6" strokeWidth="5" />
            <path d="M5 43 L7 46 M85 122 L88 125" stroke="#cfe9c0" strokeWidth="1" />
            <path d="M31 66 L56 91 L103 41" fill="none" stroke="#a5dc86" strokeWidth="7" strokeLinecap="round" />
          </svg>
          <DialogTitle>Ticket Creation</DialogTitle>
          <DialogText>Your ticket SR2216564 is created successfully.</DialogText>
          <OkBtn>Ok</OkBtn>
        </Dialog>

        <ZoomWindow>
          <ZoomHead>
            <span>Jadhav, Shivani (Cognizant), Patidar,...</span>
            <ZoomMin>
              <Minus size={20} />
            </ZoomMin>
            <ZoomExpand>
              <Maximize2 size={24} strokeWidth={1.4} />
            </ZoomExpand>
          </ZoomHead>
          <ZoomRow>
            <ZoomTime>20:50</ZoomTime>
            <ZoomTool $w={30}>
              <VideoOff size={26} />
            </ZoomTool>
            <ZoomTool $w={76}>
              <Mic size={26} />
            </ZoomTool>
            <ZoomTool $w={34}>
              <X size={24} />
            </ZoomTool>
            <ZoomEnd>
              <i />
            </ZoomEnd>
          </ZoomRow>
        </ZoomWindow>
      </Frame>
    </>
  );
}
